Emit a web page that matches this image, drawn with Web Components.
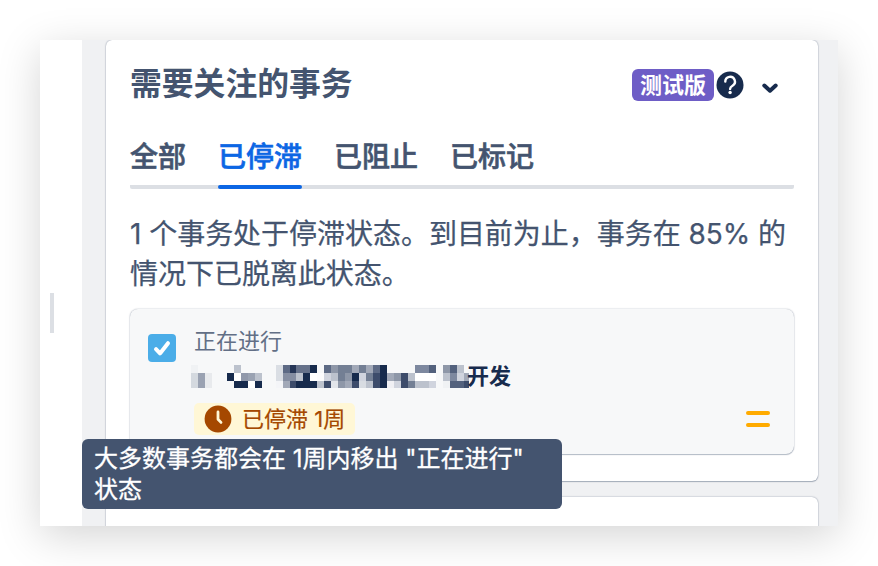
<!DOCTYPE html>
<html lang="zh-CN">
<head>
<meta charset="utf-8">
<title>需要关注的事务</title>
<style>
  body {
    margin: 0;
    background: #fff;
    font-family: Inter, "Noto Sans CJK SC", sans-serif;
    color: #44546f;
  }
</style>
</head>
<body>
<board-window>
  <insight-card>
    <insight-header slot="header" label="测试版">需要关注的事务</insight-header>
    <tab-list>
      <tab-item>全部</tab-item>
      <tab-item selected>已停滞</tab-item>
      <tab-item>已阻止</tab-item>
      <tab-item>已标记</tab-item>
    </tab-list>
    <insight-text>1 个事务处于停滞状态。到目前为止，事务在 85% 的<br>情况下已脱离此状态。</insight-text>
    <issue-card status="正在进行">
      <masked-text slot="summary"></masked-text>
      <span slot="summary">开发</span>
      <stalled-badge slot="badge">已停滞 1周</stalled-badge>
    </issue-card>
  </insight-card>
  <insight-card next></insight-card>
  <tool-tip slot="overlay">大多数事务都会在 1周内移出 "正在进行"<br>状态</tool-tip>
</board-window>

<script>
function define(name, html, setup) {
  const tmpl = document.createElement('template');
  tmpl.innerHTML = html;
  customElements.define(name, class extends HTMLElement {
    constructor() {
      super();
      this.attachShadow({mode: 'open'}).appendChild(tmpl.content.cloneNode(true));
    }
    connectedCallback() {
      if (setup) setup(this, this.shadowRoot);
    }
  });
}

define('board-window', `
<style>
  :host {
    display: flex;
    position: relative;
    box-sizing: border-box;
    width: 798px;
    height: 486px;
    margin: 40px;
    background: #f0f1f3;
    box-shadow: 0 10px 40px rgba(0, 0, 0, .17);
  }
  .side {
    display: flex;
    align-items: center;
    width: 42px;
    padding-top: 59px;
    box-sizing: border-box;
    background: #fff;
  }
  .handle {
    width: 4px;
    height: 40px;
    margin-left: 10px;
    background: #dcdfe4;
  }
  .main {
    display: flex;
    flex-direction: column;
    gap: 16px;
    width: 712px;
    padding: 0 20px 0 24px;
    overflow: hidden;
  }
</style>
<div class="side"><div class="handle"></div></div>
<div class="main"><slot></slot></div>
<slot name="overlay"></slot>
`);

define('insight-card', `
<style>
  :host {
    display: block;
    flex: none;
    box-sizing: border-box;
    height: 441px;
    padding: 24px 24px 0;
    border-radius: 6px;
    background: #fff;
    box-shadow: 0 1px 1px rgba(9, 30, 66, .25), 0 0 1.5px rgba(9, 30, 66, .5);
  }
  :host([next]) {
    height: 80px;
  }
</style>
<slot name="header"></slot>
<slot></slot>
`);

define('insight-header', `
<style>
  :host {
    display: flex;
    align-items: center;
    height: 42px;
  }
  .title {
    flex: 1;
    margin-top: -2px;
    font-size: 31.8px;
    line-height: 42px;
    font-weight: 600;
  }
  .label {
    width: 82px;
    height: 32px;
    border-radius: 6px;
    background: #6e5dc6;
    color: #fff;
    font-size: 22px;
    line-height: 32px;
    font-weight: 700;
    text-align: center;
  }
  svg { display: block; }
  .help { margin-left: 2px; }
  .chevron { margin: 5px 15px 0 18px; }
</style>
<div class="title"><slot></slot></div>
<div class="label"></div>
<svg class="help" width="28" height="28" viewBox="0 0 28 28" fill="none">
  <circle cx="14" cy="14" r="13.5" fill="#172b4d"/>
  <path d="M9.3 10.6a4.8 4.8 0 1 1 7.2 4.1c-1.7 1-2.4 1.6-2.4 3.2" stroke="#fff" stroke-width="2.4" stroke-linecap="round"/>
  <circle cx="14.1" cy="21.5" r="1.7" fill="#fff"/>
</svg>
<svg class="chevron" width="17" height="12" viewBox="0 0 17 12" fill="none">
  <path d="M2.3 3.5 8 8.7l5.7-5.2" stroke="#172b4d" stroke-width="4" stroke-linecap="round" stroke-linejoin="round"/>
</svg>
`, (host, root) => {
  root.querySelector('.label').textContent = host.getAttribute('label');
});

define('tab-list', `
<style>
  :host {
    display: flex;
    gap: 32px;
    box-sizing: border-box;
    height: 65px;
    margin-top: 18px;
    background: linear-gradient(#dcdfe4, #dcdfe4) 0 100% / 100% 4px no-repeat;
    border-radius: 2px;
  }
</style>
<slot></slot>
`);

define('tab-item', `
<style>
  :host {
    display: block;
    box-sizing: border-box;
    height: 65px;
    padding-top: 13px;
    font-size: 28px;
    line-height: 40px;
    font-weight: 500;
    -webkit-text-stroke: .6px;
  }
  :host([selected]) {
    color: #0c66e4;
  }
  .line { height: 4px; margin-top: 8px; border-radius: 2px; }
  :host([selected]) .line { background: #0c66e4; }
</style>
<slot></slot>
<div class="line"></div>
`);

define('insight-text', `
<style>
  :host {
    display: block;
    padding-top: 25px;
    font-size: 28px;
    line-height: 40px;
    letter-spacing: -.03px;
    white-space: nowrap;
    -webkit-text-stroke: .25px;
  }
</style>
<slot></slot>
`);

define('issue-card', `
<style>
  :host {
    display: flex;
    box-sizing: border-box;
    height: 145px;
    margin-top: 15px;
    padding: 16px 24px 0 18px;
    border-radius: 8px;
    background: #f7f8f9;
    box-shadow: 0 1px 1px rgba(9, 30, 66, .25), 0 0 1.5px rgba(9, 30, 66, .4);
  }
  svg { display: block; flex: none; }
  .check { margin-top: 9px; }
  .body { flex: 1; margin-left: 18px; }
  .status {
    height: 32px;
    font-size: 22px;
    line-height: 32px;
    color: #626f86;
  }
  .summary {
    display: flex;
    align-items: center;
    height: 38px;
    font-size: 22px;
    line-height: 38px;
    font-weight: 600;
    color: #172b4d;
  }
  .priority { margin-top: 85px; }
</style>
<svg class="check" width="28" height="28" viewBox="0 0 28 28" fill="none">
  <rect width="28" height="28" rx="4" fill="#4bade8"/>
  <path d="m8 15.2 4 4.2 8-10.2" stroke="#fff" stroke-width="4" stroke-linecap="round" stroke-linejoin="round"/>
</svg>
<div class="body">
  <div class="status"></div>
  <div class="summary"><slot name="summary"></slot></div>
  <slot name="badge"></slot>
</div>
<svg class="priority" width="24" height="18" viewBox="0 0 24 18" fill="#ffab00">
  <rect y="1" width="24" height="4" rx="2"/>
  <rect y="13" width="24" height="4" rx="2"/>
</svg>
`, (host, root) => {
  root.querySelector('.status').textContent = host.getAttribute('status');
});

// pixelated part of the summary: [column, colour] cells, one list per row
const MASK = [
  '0 f0f2f4,6 bcc2cd,12 dadee4,13 5d6a85,14 263657,15 65718a,16 65718a,17 172b4d,19 5d6a85,20 8e97a8,21 737f94,22 737f94,23 a2a9b8,24 737f94,25 a2a9b8,26 5d6a85,27 172b4d,32 7d889f,33 7d889f,34 53617d,36 8e97a8,37 53617d,38 bcc2cd',
  '0 d4d9df,1 9aa2b2,2 e8eaed,5 172b4d,6 ffffff,7 9098aa,8 9aa2b2,9 bcc2cd,12 dadee4,13 858ea2,14 858ea2,15 bcc2cd,16 172b4d,17 ffffff,18 fcfcfd,19 d0d4de,20 bcc2cd,21 737f94,22 8e97a8,23 172b4d,24 d0d4de,25 737f94,26 3d4c6b,27 172b4d,28 a2a9b8,29 8e97a8,30 3d4c6b,31 bcc2cd,32 ffffff,33 ffffff,34 ffffff,36 bcc2cd,37 7d889f,38 d0d4de,39 a2a9b8',
  '0 d4d9df,1 9aa2b2,2 e8eaed,6 172b4d,7 172b4d,8 ffffff,9 172b4d,12 f4f5f8,13 a2a9b8,14 3d4c6b,15 172b4d,16 172b4d,17 172b4d,18 bcc2cd,19 3d4c6b,20 e2e5ea,21 8e97a8,22 a2a9b8,23 3d4c6b,24 d8dce2,25 bcc2cd,26 3d4c6b,27 172b4d,28 f0f0f4,29 d0d4de,30 3d4c6b,31 737f94,32 bcc2cd,33 bcc2cd,34 d0d4de,36 f0f2f4,37 53617d,38 53617d,39 3d4c6b'
];

define('masked-text', `
<style>
  :host {
    display: block;
    width: 276px;
    height: 23px;
    margin: 1px 0 0 -3px;
  }
  svg { display: block; }
</style>
<svg width="280" height="23" shape-rendering="crispEdges"></svg>
`, (host, root) => {
  root.querySelector('svg').innerHTML = MASK.map((row, y) => row.split(',').map(cell => {
    const [x, color] = cell.split(' ');
    const left = x * 7 + (x > 4 && x < 15 ? 1 : 0);
    return `<rect x="${left}" y="${y * 8}" width="${x == 39 ? 5 : 7}" height="${y == 2 ? 7 : 8}" fill="#${color}"/>`;
  }).join('')).join('');
});

define('stalled-badge', `
<style>
  :host {
    display: flex;
    align-items: center;
    box-sizing: border-box;
    width: 161px;
    height: 32px;
    margin-top: 8px;
    padding-left: 10px;
    border-radius: 5px;
    background: #fff7d6;
    color: #a54800;
    font-size: 22px;
    line-height: 32px;
    white-space: nowrap;
    -webkit-text-stroke: .2px;
  }
  svg { flex: none; margin-right: 10px; }
</style>
<svg width="28" height="28" viewBox="0 0 28 28" fill="none">
  <circle cx="14" cy="14" r="13.4" fill="#a54800"/>
  <path d="M14 7v7.2l3 3.2" stroke="#fff7d6" stroke-width="2.8" stroke-linecap="round" stroke-linejoin="round"/>
</svg>
<span><slot></slot></span>
`);

define('tool-tip', `
<style>
  :host {
    display: block;
    position: absolute;
    left: 42px;
    top: 399px;
    box-sizing: border-box;
    width: 480px;
    height: 70px;
    padding: 4px 12px;
    border-radius: 6px;
    background: #44546f;
    color: #fff;
    font-size: 24px;
    line-height: 31px;
    white-space: nowrap;
    -webkit-text-stroke: .3px;
  }
</style>
<slot></slot>
`);
</script>
</body>
</html>
